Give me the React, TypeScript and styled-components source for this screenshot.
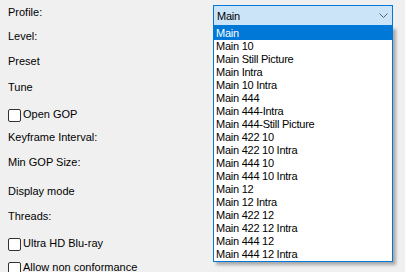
import React from "react";
import styled, { createGlobalStyle } from "styled-components";

const GlobalStyle = createGlobalStyle`
  *, *::before, *::after { box-sizing: border-box; }
  html, body { margin: 0; padding: 0; background: #f0f0f0; }
  body {
    font-family: "Liberation Sans", Arial, sans-serif;
    font-size: 11px;
    color: #000;
  }
`;

const Page = styled.div`
  position: relative;
  width: 405px;
  height: 272px;
  overflow: hidden;
  background: #f0f0f0;
`;

const Form = styled.div`
  display: flex;
  flex-direction: column;
  padding-left: 8px;
`;

const Row = styled.div<{ $mt: number }>`
  display: grid;
  grid-template-columns: 205px 180px;
  align-items: start;
  margin-top: ${(p) => p.$mt}px;
  min-height: 20px;
`;

const Label = styled.div`
  height: 20px;
  display: flex;
  align-items: center;
  line-height: 14px;
  white-space: nowrap;
`;

const CheckLabel = styled.label`
  height: 20px;
  display: flex;
  align-items: flex-start;
  gap: 2px;
  line-height: 14px;
  white-space: nowrap;
  grid-column: 1 / span 2;
`;

const Box = styled.span`
  width: 13px;
  height: 13px;
  margin-top: 5px;
  border: 1px solid #333;
  border-radius: 2px;
  background: #fff;
  flex: none;
`;

const CheckText = styled.span`
  margin-top: 3px;
`;

const Combo = styled.div`
  margin-top: 3px;
  width: 180px;
  height: 21px;
  border: 1px solid #0078d7;
  background: #cce4f7;
  display: flex;
  align-items: center;
  justify-content: space-between;
  padding: 0 3px 0 3px;
  letter-spacing: -0.25px;
  line-height: 14px;
`;

const Chevron = styled.svg`
  display: block;
  margin-right: 1px;
`;

const DropList = styled.ul`
  position: absolute;
  left: 213px;
  top: 26px;
  width: 180px;
  margin: 0;
  padding: 0;
  list-style: none;
  background: #fff;
  border: 1px solid #0078d7;
  box-shadow: 3px 3px 3px rgba(0, 0, 0, 0.3);
`;

const Item = styled.li<{ $active?: boolean }>`
  height: 13px;
  line-height: 13px;
  padding-left: 2px;
  letter-spacing: -0.25px;
  white-space: nowrap;
  background: ${(p) => (p.$active ? "#0078d7" : "transparent")};
  color: ${(p) => (p.$active ? "#fff" : "#000")};
`;

const profiles = [
  "Main",
  "Main 10",
  "Main Still Picture",
  "Main Intra",
  "Main 10 Intra",
  "Main 444",
  "Main 444-Intra",
  "Main 444-Still Picture",
  "Main 422 10",
  "Main 422 10 Intra",
  "Main 444 10",
  "Main 444 10 Intra",
  "Main 12",
  "Main 12 Intra",
  "Main 422 12",
  "Main 422 12 Intra",
  "Main 444 12",
  "Main 444 12 Intra",
];

function Check({ text }: { text: string }) {
  return (
    <CheckLabel>
      <Box />
      <CheckText>{text}</CheckText>
    </CheckLabel>
  );
}

export default function App() {
  return (
    <>
      <GlobalStyle />
      <Page>
        <Form>
          <Row $mt={2}>
            <Label>Profile:</Label>
            <Combo>
              <span>Main</span>
              <Chevron width="9" height="5" viewBox="0 0 9 5">
                <polyline
                  points="0.5,0.5 4.5,4.5 8.5,0.5"
                  fill="none"
                  stroke="#606060"
                  strokeWidth="1"
                />
              </Chevron>
            </Combo>
          </Row>
          <Row $mt={0}>
            <Label>Level:</Label>
          </Row>
          <Row $mt={5}>
            <Label>Preset</Label>
          </Row>
          <Row $mt={6}>
            <Label>Tune</Label>
          </Row>
          <Row $mt={7}>
            <Check text="Open GOP" />
          </Row>
          <Row $mt={3}>
            <Label>Keyframe Interval:</Label>
          </Row>
          <Row $mt={5}>
            <Label>Min GOP Size:</Label>
          </Row>
          <Row $mt={9}>
            <Label>Display mode</Label>
          </Row>
          <Row $mt={5}>
            <Label>Threads:</Label>
          </Row>
          <Row $mt={7}>
            <Check text="Ultra HD Blu-ray" />
          </Row>
          <Row $mt={4}>
            <Check text="Allow non conformance" />
          </Row>
        </Form>
        <DropList>
          {profiles.map((p, i) => (
            <Item key={p} $active={i === 0}>
              {p}
            </Item>
          ))}
        </DropList>
      </Page>
    </>
  );
}
